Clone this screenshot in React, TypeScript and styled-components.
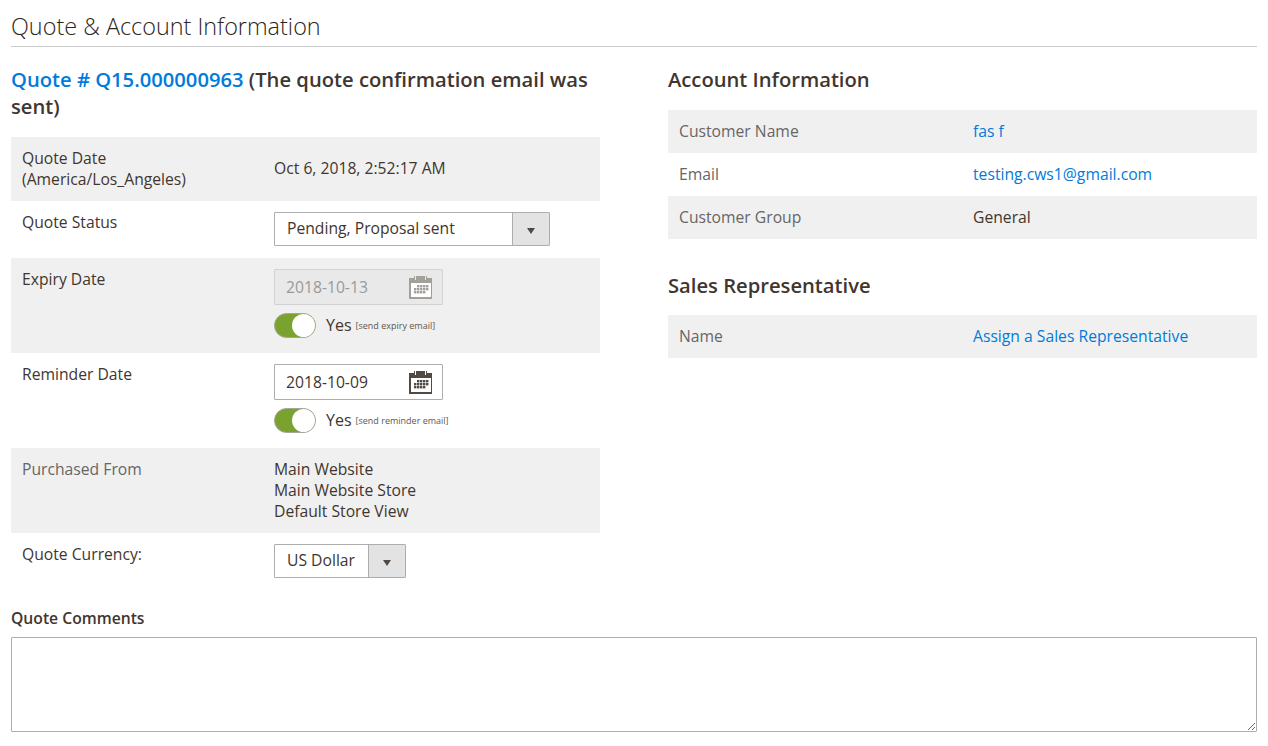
import styled, {createGlobalStyle} from "styled-components";

const GlobalStyle = createGlobalStyle`
  html, body {
    margin: 0;
    background: #fff;
  }
  body {
    font-family: "Open Sans", "Liberation Sans", sans-serif;
    font-size: 15.7px;
    line-height: 21px;
    color: #41362f;
  }
  * {
    box-sizing: border-box;
  }
`
const Page = styled.div`
  padding: 9px 11px 0;
`
const SectionTitle = styled.h2`
  margin: 0;
  height: 38px;
  font-size: 23.4px;
  line-height: 35px;
  font-weight: 300;
  color: #2d2520;
  border-bottom: 1px solid #cccccc;
`
const Columns = styled.div`
  display: grid;
  grid-template-columns: 589px 589px;
  justify-content: space-between;
  padding-top: 19px;
`
const Heading = styled.h3`
  margin: 0;
  font-size: 20.2px;
  line-height: 27px;
  font-weight: 600;
  color: #41362f;
  a {
    color: #007bdb;
    text-decoration: none;
  }
`
const InfoTable = styled.div<{$top: number}>`
  margin-top: ${p => p.$top}px;
`
const Row = styled.div<{$shade?: boolean, $valueLeft: number, $height: number}>`
  display: grid;
  grid-template-columns: ${p => p.$valueLeft}px 1fr;
  min-height: ${p => p.$height}px;
  padding: 11px 11px 0;
  background: ${p => (p.$shade ? "#f0f0f0" : "#fff")};
`
const Label = styled.div<{$muted?: boolean}>`
  color: ${p => (p.$muted ? "#666" : "#41362f")};
`
const Value = styled.div<{$nudge?: number}>`
  padding-top: ${p => p.$nudge || 0}px;
`
const Link = styled.a`
  color: #007bdb;
  text-decoration: none;
`
const Select = styled.div<{$width: number}>`
  display: flex;
  width: ${p => p.$width}px;
  height: 34px;
  border: 1px solid #adadad;
  border-radius: 1px;
  background: #fff;
`
const SelectText = styled.div`
  flex: 1;
  padding: 5px 12px;
`
const SelectButton = styled.div`
  display: flex;
  align-items: center;
  justify-content: center;
  width: 37px;
  background: #e3e3e3;
  border-left: 1px solid #adadad;
  &::after {
    content: "";
    margin-top: 3px;
    border-style: solid;
    border-width: 6px 4.5px 0;
    border-color: #514943 transparent transparent;
  }
`
const DateBox = styled.div<{$disabled?: boolean}>`
  display: flex;
  align-items: center;
  justify-content: space-between;
  width: 169px;
  height: 36px;
  padding: 0 9px 0 11px;
  border: 1px solid ${p => (p.$disabled ? "#d2d2d2" : "#adadad")};
  border-radius: 1px;
  background: ${p => (p.$disabled ? "#e9e9e9" : "#fff")};
  color: ${p => (p.$disabled ? "#999" : "#41362f")};
`
const ToggleRow = styled.div`
  display: flex;
  align-items: center;
  margin-top: 8px;
  height: 25px;
`
const Toggle = styled.div`
  display: flex;
  justify-content: flex-end;
  width: 42px;
  height: 25px;
  border-radius: 13px;
  background: #79a22e;
  border: 1px solid #a5a598;
`
const Knob = styled.div`
  width: 23px;
  height: 23px;
  border-radius: 50%;
  background: #fff;
`
const YesText = styled.span`
  margin-left: 10px;
  font-size: 16px;
`
const Hint = styled.span`
  margin-left: 4px;
  font-size: 9px;
  color: #5f564f;
`
const SubHeading = styled(Heading)`
  margin-top: 33px;
`
const CommentLabel = styled.label`
  display: block;
  margin-top: 19px;
  font-weight: 600;
  color: #41362f;
`
const CommentBox = styled.textarea`
  display: block;
  width: 100%;
  height: 95px;
  margin-top: 8px;
  border: 1px solid #adadad;
  border-radius: 1px;
  outline: none;
  resize: vertical;
  background: #fff;
`

const Calendar = ({color}: {color: string}) => (
    <svg width="24" height="24" viewBox="0 0 24 24">
        <path fill={color} d="M0 3h5V1h1v4h1V1h9v4h1V1h1v2h5v21H0z"/>
        <rect x="2" y="8" width="20" height="14" fill="#fff"/>
        <g fill={color}>
            {[0, 1, 2].map(r => [0, 1, 2, 3, 4].map(c =>
                (r === 0 && c === 0) || (r === 2 && c === 4) ? null :
                    <rect key={r + '-' + c} x={5 + c * 3} y={10 + r * 3} width="2.4" height="2.4"/>
            ))}
        </g>
    </svg>
)

const App = () => {
    return (
        <Page>
            <GlobalStyle/>
            <SectionTitle>Quote &amp; Account Information</SectionTitle>
            <Columns>
                <div>
                    <Heading><a href="#">Quote # Q15.000000963</a> (The quote confirmation email was sent)</Heading>
                    <InfoTable $top={17}>
                        <Row $shade $valueLeft={252} $height={64}>
                            <Label>Quote Date<br/>(America/Los_Angeles)</Label>
                            <Value $nudge={10}>Oct 6, 2018, 2:52:17 AM</Value>
                        </Row>
                        <Row $valueLeft={252} $height={57}>
                            <Label>Quote Status</Label>
                            <Value>
                                <Select $width={276}>
                                    <SelectText>Pending, Proposal sent</SelectText>
                                    <SelectButton/>
                                </Select>
                            </Value>
                        </Row>
                        <Row $shade $valueLeft={252} $height={95}>
                            <Label>Expiry Date</Label>
                            <Value>
                                <DateBox $disabled>2018-10-13<Calendar color="#a39f9b"/></DateBox>
                                <ToggleRow>
                                    <Toggle><Knob/></Toggle>
                                    <YesText>Yes</YesText>
                                    <Hint>[send expiry email]</Hint>
                                </ToggleRow>
                            </Value>
                        </Row>
                        <Row $valueLeft={252} $height={95}>
                            <Label>Reminder Date</Label>
                            <Value>
                                <DateBox>2018-10-09<Calendar color="#514943"/></DateBox>
                                <ToggleRow>
                                    <Toggle><Knob/></Toggle>
                                    <YesText>Yes</YesText>
                                    <Hint>[send reminder email]</Hint>
                                </ToggleRow>
                            </Value>
                        </Row>
                        <Row $shade $valueLeft={252} $height={85}>
                            <Label $muted>Purchased From</Label>
                            <Value>Main Website<br/>Main Website Store<br/>Default Store View</Value>
                        </Row>
                        <Row $valueLeft={252} $height={56}>
                            <Label>Quote Currency:</Label>
                            <Value>
                                <Select $width={132}>
                                    <SelectText>US Dollar</SelectText>
                                    <SelectButton/>
                                </Select>
                            </Value>
                        </Row>
                    </InfoTable>
                </div>
                <div>
                    <Heading>Account Information</Heading>
                    <InfoTable $top={17}>
                        <Row $shade $valueLeft={294} $height={43}>
                            <Label $muted>Customer Name</Label>
                            <Link href="#">fas f</Link>
                        </Row>
                        <Row $valueLeft={294} $height={43}>
                            <Label $muted>Email</Label>
                            <Link href="#">testing.cws1@gmail.com</Link>
                        </Row>
                        <Row $shade $valueLeft={294} $height={43}>
                            <Label $muted>Customer Group</Label>
                            <Value>General</Value>
                        </Row>
                    </InfoTable>
                    <SubHeading>Sales Representative</SubHeading>
                    <InfoTable $top={16}>
                        <Row $shade $valueLeft={294} $height={43}>
                            <Label $muted>Name</Label>
                            <Link href="#">Assign a Sales Representative</Link>
                        </Row>
                    </InfoTable>
                </div>
            </Columns>
            <CommentLabel htmlFor="quote-comments">Quote Comments</CommentLabel>
            <CommentBox id="quote-comments"/>
        </Page>
    )
}

export default App
